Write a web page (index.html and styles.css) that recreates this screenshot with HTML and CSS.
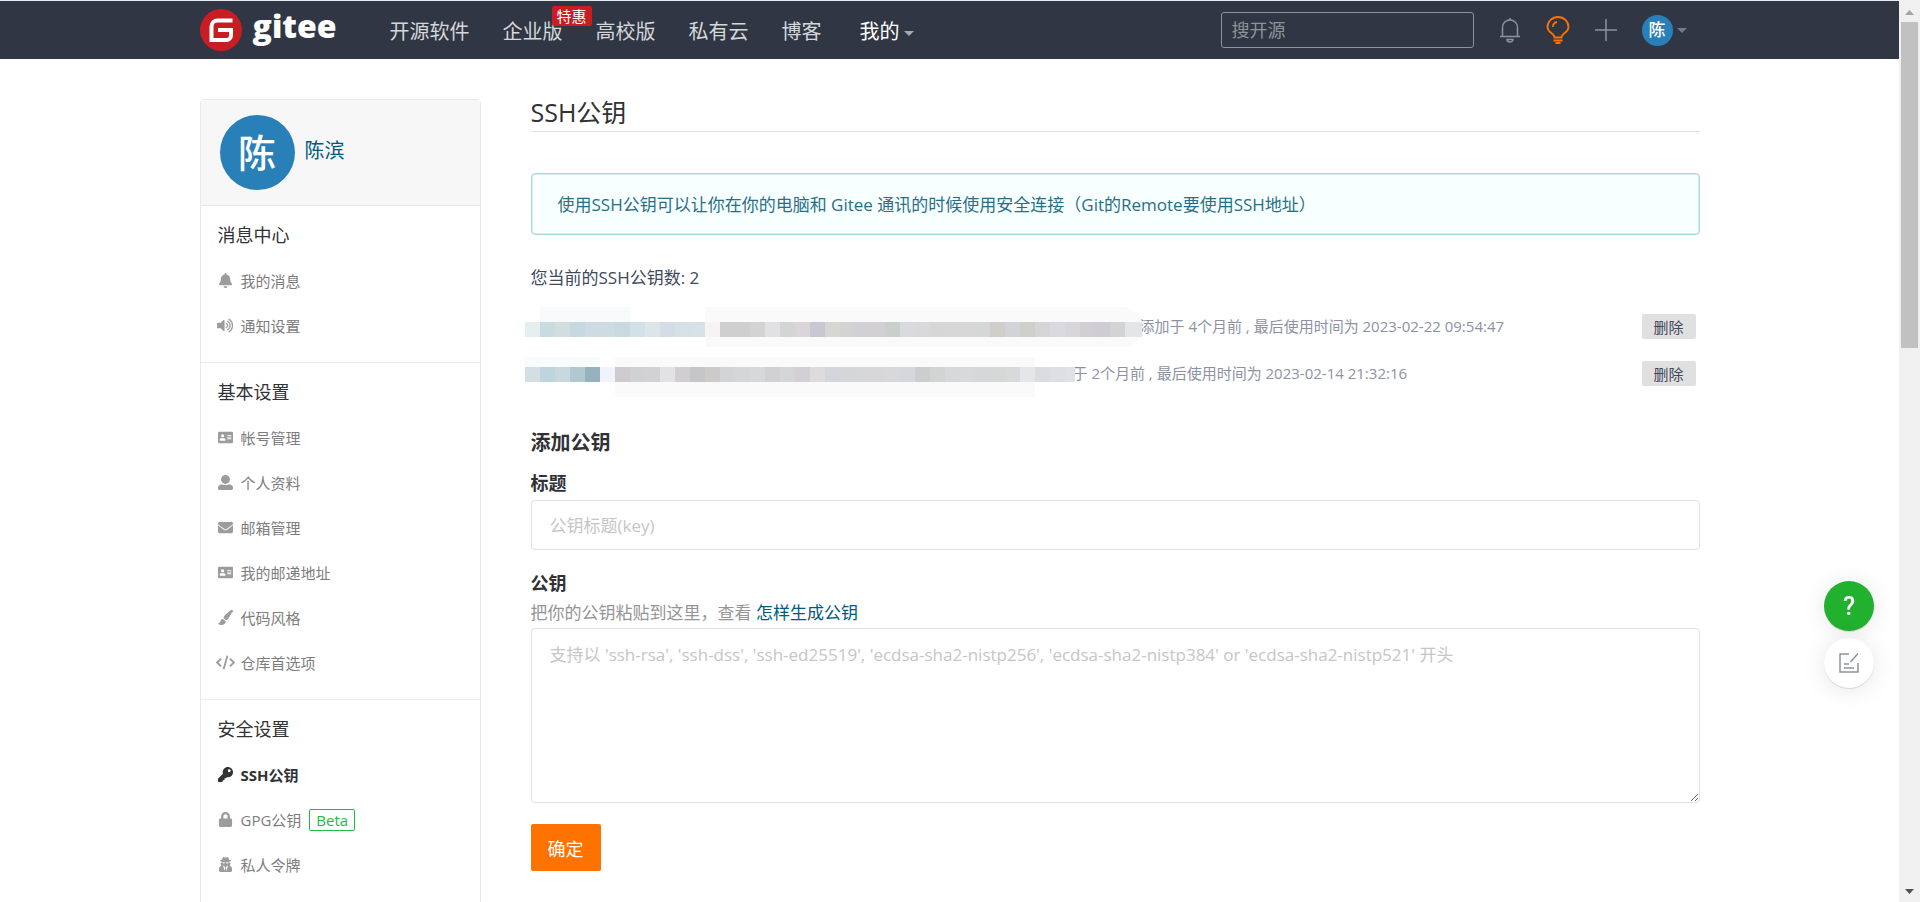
FILE: index.html
```html
<!DOCTYPE html>
<html lang="zh-CN">
<head>
<meta charset="utf-8">
<title>SSH公钥 - Gitee</title>
<link rel="stylesheet" href="styles.css">
</head>
<body>
<div class="window">
<div class="page">
  <header class="topbar">
    <div class="container topbar-inner">
      <a class="logo" href="#">
        <svg class="logo-mark" viewBox="0 0 42 42" aria-hidden="true"><circle cx="21" cy="21" r="21" fill="#c71d23"/><path d="M32.500 11.500H17.500a6 6 0 0 0-6 6V31H26.500a4.500 4.500 0 0 0 4.500-4.500V21H18" fill="none" stroke="#fff" stroke-width="4"/></svg>
        <span class="logo-text">gitee</span>
      </a>
      <nav class="nav">
        <a href="#">开源软件</a>
        <a href="#" class="has-tag">企业版<span class="tag">特惠</span></a>
        <a href="#">高校版</a>
        <a href="#">私有云</a>
        <a href="#">博客</a>
        <a href="#" class="mine">我的<span class="caret"></span></a>
      </nav>
      <div class="tools">
        <input class="search" type="text" placeholder="搜开源" aria-label="搜开源">
        <button class="tool" aria-label="通知"><svg width="22" height="26" viewBox="0 0 22 26" fill="none" stroke="#8c92a4" stroke-width="1.500"><path d="M1 19.500H21M3.500 19V10.500C3.500 6 7 3 11 3s7.500 3 7.500 7.500V19M8 22.500h6a3 2.500 0 0 1-6 0ZM10 2h2"/></svg></button>
        <button class="tool" aria-label="推荐"><svg width="24" height="28" viewBox="0 0 24 28" fill="none" stroke="#fe7300" stroke-width="1.800"><path d="M8.500 21.500C8.500 17 1.500 17 1.500 11a10.500 10 0 0 1 21 0c0 6-7 6-7 10.500ZM7 11a5 5 0 0 1 4-5M7.500 24.500h9M9.500 27h5"/></svg></button>
        <button class="tool" aria-label="新建"><svg width="22" height="22" viewBox="0 0 22 22" stroke="#8c92a4" stroke-width="1.500"><path d="M0 11H22M11 0V22"/></svg></button>
        <button class="account" aria-label="账户"><span class="avatar avatar-small">陈</span><span class="caret"></span></button>
      </div>
    </div>
  </header>

  <div class="container content">
    <aside class="sidebar">
      <div class="profile"><span class="avatar">陈</span><a href="#">陈滨</a></div>
      <section class="group">
        <h2>消息中心</h2>
        <a href="#"><svg viewBox="0 0 448 512"><path d="M224 512c35.320 0 63.970-28.650 63.970-64H160.030c0 35.350 28.650 64 63.970 64zm215.390-149.710c-19.320-20.760-55.470-51.990-55.470-154.290 0-77.700-54.480-139.900-127.940-155.160V32c0-17.670-14.320-32-31.980-32s-31.980 14.330-31.980 32v20.840C118.560 68.100 64.080 130.300 64.080 208c0 102.300-36.150 133.530-55.470 154.290-6 6.450-8.660 14.160-8.610 21.710.110 16.400 12.980 32 32.100 32h383.800c19.120 0 32-15.600 32.100-32 .050-7.550-2.610-15.270-8.610-21.710z"/></svg>我的消息</a>
        <a href="#"><svg class="wide" viewBox="0 0 576 512"><path d="M215 71 126 160H24c-13 0-24 11-24 24v144c0 13 11 24 24 24h102l89 89c15 15 41 4 41-17V88c0-21-26-32-41-17Z"/><path d="M318 183a84 84 0 0 1 0 146M362 112a166 166 0 0 1 0 288M408 45a248 248 0 0 1 0 422" fill="none" stroke="currentColor" stroke-width="46" stroke-linecap="round"/></svg>通知设置</a>
      </section>
      <section class="group">
        <h2>基本设置</h2>
        <a href="#"><svg viewBox="0 0 576 512"><path fill-rule="evenodd" d="M528 32H48C21.500 32 0 53.500 0 80v352c0 26.500 21.500 48 48 48h480c26.500 0 48-21.500 48-48V80c0-26.500-21.500-48-48-48zM176 128a64 64 0 1 1 0 128 64 64 0 0 1 0-128zm112 236c0 11-10 20-22 20H86c-12 0-22-9-22-20v-19c0-32 30-58 67-58h90c37 0 67 26 67 58ZM512 312c0 4-4 8-8 8H360c-4 0-8-4-8-8v-16c0-4 4-8 8-8h144c4 0 8 4 8 8zm0-64c0 4-4 8-8 8H360c-4 0-8-4-8-8v-16c0-4 4-8 8-8h144c4 0 8 4 8 8zm0-64c0 4-4 8-8 8H360c-4 0-8-4-8-8v-16c0-4 4-8 8-8h144c4 0 8 4 8 8z"/></svg>帐号管理</a>
        <a href="#"><svg viewBox="0 0 512 512"><path d="M256 0a152 152 0 1 1 0 304 152 152 0 0 1 0-304ZM110 320h45c62 29 140 29 202 0h45c61 0 110 49 110 110v34c0 27-21 48-48 48H48c-27 0-48-21-48-48v-34c0-61 49-110 110-110Z"/></svg>个人资料</a>
        <a href="#"><svg viewBox="0 0 512 512"><path d="M502.300 190.800c3.900-3.100 9.700-.2 9.700 4.700V400c0 26.500-21.500 48-48 48H48c-26.500 0-48-21.500-48-48V195.600c0-5 5.700-7.800 9.700-4.700 22.400 17.400 52.100 39.500 154.100 113.600 21.100 15.400 56.700 47.800 92.200 47.600 35.700.3 72-32.800 92.300-47.600 102-74.100 131.600-96.300 154-113.700zM256 320c23.200.4 56.600-29.200 73.400-41.400 132.700-96.300 142.800-104.700 173.400-128.700 5.800-4.500 9.200-11.500 9.200-18.900v-19c0-26.500-21.500-48-48-48H48c-26.500 0-48 21.500-48 48v19c0 7.400 3.400 14.300 9.200 18.900 30.600 23.900 40.700 32.400 173.400 128.700 16.800 12.200 50.200 41.800 73.400 41.400z"/></svg>邮箱管理</a>
        <a href="#"><svg viewBox="0 0 576 512"><path fill-rule="evenodd" d="M528 32H48C21.500 32 0 53.500 0 80v352c0 26.500 21.500 48 48 48h480c26.500 0 48-21.500 48-48V80c0-26.500-21.500-48-48-48zM176 128a64 64 0 1 1 0 128 64 64 0 0 1 0-128zm112 236c0 11-10 20-22 20H86c-12 0-22-9-22-20v-19c0-32 30-58 67-58h90c37 0 67 26 67 58ZM512 312c0 4-4 8-8 8H360c-4 0-8-4-8-8v-16c0-4 4-8 8-8h144c4 0 8 4 8 8zm0-64c0 4-4 8-8 8H360c-4 0-8-4-8-8v-16c0-4 4-8 8-8h144c4 0 8 4 8 8zm0-64c0 4-4 8-8 8H360c-4 0-8-4-8-8v-16c0-4 4-8 8-8h144c4 0 8 4 8 8z"/></svg>我的邮递地址</a>
        <a href="#"><svg viewBox="0 0 512 512"><path d="M168 307c-48 1-87 39-87 88 0 32-24 49-47 49-10 0-21-8-34-20 10 56 55 88 117 88 90 0 145-51 145-121v-4ZM457 0c-15 0-30 7-41 17C213 197 192 213 192 257c0 11 3 21 6 31l75 63c46-9 77-41 213-295 9-17 18-36 18-56 0-24-23 0-47 0ZM512 45c0-28-24-45-55-45l-55 30 80 60Z"/></svg>代码风格</a>
        <a href="#"><svg class="wide" viewBox="0 0 640 512"><path d="M170 120 35 256l135 136M470 120l135 136-135 136M385 25 255 487" fill="none" stroke="currentColor" stroke-width="62"/></svg>仓库首选项</a>
      </section>
      <section class="group">
        <h2>安全设置</h2>
        <a href="#" class="active"><svg viewBox="0 0 512 512"><path d="M512 176.001C512 273.203 433.202 352 336 352c-11.220 0-22.190-1.062-32.827-3.069l-24.012 27.014A23.999 23.999 0 0 1 261.223 384H224v40c0 13.255-10.745 24-24 24h-40v40c0 13.255-10.745 24-24 24H24c-13.255 0-24-10.745-24-24v-78.059c0-6.365 2.529-12.470 7.029-16.971l161.802-161.802C163.108 213.814 160 195.271 160 176 160 78.798 238.797.001 335.999 0 433.488-.001 512 78.511 512 176.001zM336 128c0 26.510 21.490 48 48 48s48-21.490 48-48-21.490-48-48-48-48 21.490-48 48z"/></svg>SSH公钥</a>
        <a href="#"><svg viewBox="0 0 448 512"><path d="M400 224h-24v-72C376 68.200 307.800 0 224 0S72 68.200 72 152v72H48c-26.500 0-48 21.500-48 48v192c0 26.500 21.500 48 48 48h352c26.500 0 48-21.500 48-48V272c0-26.500-21.500-48-48-48zm-104 0H152v-72c0-39.700 32.300-72 72-72s72 32.300 72 72v72z"/></svg>GPG公钥<span class="beta">Beta</span></a>
        <a href="#"><svg viewBox="0 0 448 512"><path fill-rule="evenodd" d="M135 10c15-20 40-8 63 5 17 8 35 8 52 0 23-13 48-25 63-5 15 20 27 55 34 86 40 8 66 18 66 32 0 13-22 24-58 32 8 22 5 35-3 42h32c11 0 18 11 14 21l-30 76c46 20 80 64 80 117v48c0 26-22 48-48 48H48c-26 0-48-22-48-48v-48c0-52 32-97 79-116l-28-77c-4-10 4-21 15-21h30c-8-7-11-20-3-42-36-8-58-19-58-32 0-14 26-24 66-32 7-31 19-66 34-86ZM192 480l24-112-24-48-52-30ZM256 480l52-190-52 30-24 48ZM118 183c4 55 82 55 94 5h24c12 50 90 50 94-5l-106 7Z"/></svg>私人令牌</a>
        <a href="#" aria-label="更多"><svg viewBox="0 0 512 512"><circle cx="240" cy="170" r="210"/></svg></a>
      </section>
    </aside>

    <main class="main">
      <h1>SSH公钥</h1>
      <p class="message">使用SSH公钥可以让你在你的电脑和 Gitee 通讯的时候使用安全连接（Git的Remote要使用SSH地址）</p>
      <p class="count">您当前的SSH公钥数: 2</p>
      <ul class="keys">
        <li>
          <svg class="mosaic" width="617" height="47" viewBox="0 0 617 47" aria-hidden="true">
            <path fill="#fafafb" d="M180 4H597a20 20 0 0 1 20 20 20 20 0 0 1-20 20H180Z"/><path fill="#f8fbfb" d="M15 4H105V19H15Z"/>
            <g id="m1"></g>
          </svg>
          <span>添加于 4个月前 , 最后使用时间为 2023-02-22 09:54:47</span>
          <button>删除</button>
        </li>
        <li>
          <svg class="mosaic" width="550" height="47" viewBox="0 0 550 47" aria-hidden="true">
            <path fill="#fafafa" d="M90 7H510V47H90Z"/><path fill="#f9fcfd" d="M0 7H75V17H0Z"/>
            <g id="m2"></g>
          </svg>
          <span>于 2个月前 , 最后使用时间为 2023-02-14 21:32:16</span>
          <button>删除</button>
        </li>
      </ul>
      <form class="form">
        <h2>添加公钥</h2>
        <label for="title">标题</label>
        <input id="title" type="text" placeholder="公钥标题(key)">
        <label for="key" class="key-label">公钥</label>
        <p class="hint">把你的公钥粘贴到这里，查看 <a href="#">怎样生成公钥</a></p>
        <textarea id="key" placeholder="支持以 'ssh-rsa', 'ssh-dss', 'ssh-ed25519', 'ecdsa-sha2-nistp256', 'ecdsa-sha2-nistp384' or 'ecdsa-sha2-nistp521' 开头"></textarea>
        <button type="submit">确定</button>
      </form>
    </main>
  </div>
</div>

<div class="scrollbar" aria-hidden="true">
  <svg width="9" height="5" viewBox="0 0 9 5"><path d="M0 5 4.500 0 9 5Z" fill="#a3a3a3"/></svg>
  <div class="thumb"></div>
  <svg width="9" height="5" viewBox="0 0 9 5"><path d="M0 0H9L4.500 5Z" fill="#505050"/></svg>
</div>
</div>

<div class="floating">
  <button class="help" aria-label="帮助">?</button>
  <button class="feedback" aria-label="反馈"><svg width="20" height="20" viewBox="0 0 20 20" fill="none" stroke="#8c92a4" stroke-width="1.500"><path d="M10 1H1V19H19V10M19 .5 11.500 9M5 11h5M5 15H15"/></svg></button>
</div>
<script src="mosaic.js"></script>
</body>
</html>
```
FILE: styles.css
```css
* { box-sizing: border-box; }
body, h1, h2, p, ul { margin: 0; padding: 0; }
body, input, textarea, button { font-family: "Open Sans", "Noto Sans CJK SC", sans-serif; }
body { background: #fff; color: #40485b; font-size: 17px; }
a { color: #005980; text-decoration: none; }
button { border: 0; padding: 0; background: none; cursor: pointer; }
.window { display: flex; height: 100vh; overflow: hidden; }
.page { flex: 1; min-width: 0; }
.container { max-width: 1500px; margin: 0 auto; }

.topbar { background: #303643; border-top: 1px solid #e3ecec; }
.topbar-inner { display: flex; align-items: center; height: 58px; }
.logo { display: flex; align-items: center; gap: 11px; width: 190px; }
.logo-mark { width: 42px; height: 42px; }
.logo-text { color: #fff; font-size: 32px; font-weight: 800; line-height: 42px; padding-bottom: 8px; }
.nav { display: flex; gap: 33px; padding-top: 3px; font-size: 20px; line-height: 30px; }
.nav a { color: #d5d7da; }
.has-tag { position: relative; }
.tag { position: absolute; left: 49px; top: -11px; width: 40px; border-radius: 2px; background: #c71d23; color: #fff; font-size: 15px; line-height: 20px; text-align: center; }
.nav .mine { margin-left: 5px; color: #fff; }
.caret { display: inline-block; border: 5px solid transparent; border-top-color: #a5a8ae; border-bottom: 0; margin-left: 4px; vertical-align: 3px; }
.tools { display: flex; align-items: center; gap: 25px; margin-left: auto; padding-right: 13px; }
.search { width: 253px; height: 36px; padding: 0 10px; border: 1px solid #8c92a4; border-radius: 3px; background: transparent; color: #fff; font-size: 18px; }
.search::placeholder { color: #8f9398; }
.tool { display: flex; }
.account { display: flex; align-items: center; }
.account .caret { border-top-color: #737a8a; }
.avatar { display: flex; align-items: center; justify-content: center; width: 75px; height: 75px; border-radius: 50%; background: #2980b9; color: #fff; font-size: 38px; font-weight: 500; line-height: 1; padding-bottom: 2px; }
.avatar-small { width: 31px; height: 31px; font-size: 17px; }

.content { display: flex; align-items: flex-start; gap: 50px; padding-top: 40px; }
.sidebar { flex: 0 0 281px; border: 1px solid #e3e9ed; border-radius: 4px; }
.profile { display: flex; align-items: center; gap: 10px; height: 106px; padding: 0 19px; border-bottom: 1px solid #e3e9ed; background: #f7f7f7; font-size: 20px; }
.profile a { padding-bottom: 6px; }
.group { padding: 11px 17px 14px; }
.group + .group { border-top: 1px solid #ebeced; }
.group h2 { margin-bottom: 5px; color: #303236; font-size: 18px; font-weight: 400; line-height: 36px; }
.group a { display: flex; align-items: center; height: 45px; color: #7d7d7d; font-size: 15px; }
.group svg { width: 15px; height: 15px; margin-right: 8px; fill: currentColor; color: #9c9c9c; }
.group .wide { width: 19px; margin: 0 6px 0 -2px; }
.group .active { color: #303236; font-weight: 700; }
.group .active svg { color: #303236; }
.beta { margin-left: 8px; padding: 0 6px; border: 1px solid #21ba45; border-radius: 2px; color: #21ba45; line-height: 20px; }

.main { flex: 1; min-width: 0; }
.main h1 { padding-bottom: 6px; border-bottom: 1px solid #e0e1e2; color: #303236; font-size: 25px; font-weight: 400; line-height: 26px; }
.message { margin-top: 41px; padding: 17px 26px 15px; border: 1px solid #a9d5de; border-radius: 4px; background: #f8ffff; box-shadow: 0 0 0 1px #a9d5de66 inset; color: #276f86; line-height: 28px; }
.count { margin-top: 29px; line-height: 28px; }
.keys { margin-top: 11px; list-style: none; }
.keys li { display: flex; align-items: center; height: 47px; padding-right: 4px; color: #8c92a4; font-size: 15px; }
.keys span { margin-left: -2px; padding-bottom: 3px; }
.mosaic { z-index: 1; margin-left: -6px; }
.keys button { width: 54px; height: 25px; margin-left: auto; border-radius: 2px; background: #e0e0e0; color: #40485b; font-size: 15px; }

.form { display: flex; flex-direction: column; align-items: stretch; margin-top: 32px; color: #303236; }
.form h2 { font-size: 20px; font-weight: 700; line-height: 28px; }
.form label { margin: 14px 0 5px; font-size: 18px; font-weight: 700; line-height: 24px; }
.form .key-label { margin: 21px 0 4px; }
.form input, .form textarea { padding: 0 18px; border: 1px solid #dfdfe6; border-radius: 4px; font-size: 17px; }
.form input { height: 50px; }
.form textarea { height: 175px; padding-top: 12px; line-height: 28px; }
.form input::placeholder, .form textarea::placeholder { color: #c6c6c6; }
.hint { margin-bottom: 1px; color: #959595; line-height: 28px; }
.form button { align-self: flex-start; width: 70px; height: 47px; margin-top: 21px; border-radius: 2px; background: #fe7300; color: #fff; font-size: 18px; }

.scrollbar { display: flex; flex-direction: column; align-items: center; width: 21px; padding: 10px 0 8px; background: #f0f0f0; }
.scrollbar svg { margin-top: auto; }
.scrollbar svg:first-child { margin: 0; }
.thumb { width: 17px; height: 326px; margin-top: 7px; background: #c1c1c1; }

.floating { position: fixed; right: 46px; bottom: 214px; display: flex; flex-direction: column; gap: 7px; }
.floating button { display: flex; align-items: center; justify-content: center; width: 50px; height: 50px; border-radius: 50%; background: #fff; box-shadow: 0 1px 1px #0002, 0 2px 24px #0000001a; }
.floating .help { background: #22b02f; color: #fff; font-family: Roboto, sans-serif; font-size: 25px; font-weight: 500; }
```
FILE: mosaic.js
```js
// Fills a masked key with a row of 15px colour blocks.
function fill(id, y, end, colors) {
  const group = document.getElementById(id);
  colors.split(" ").forEach((color, i) => {
    const block = document.createElementNS("http://www.w3.org/2000/svg", "rect");
    block.setAttribute("x", i * 15);
    block.setAttribute("y", y);
    block.setAttribute("width", Math.min(15, end - i * 15));
    block.setAttribute("height", 15);
    block.setAttribute("fill", "#" + color);
    group.append(block);
  });
}
fill("m1", 19, 617, "e6eff0 c9dbdf d2dddf c6d9e0 cfdbe3 ccdce2 c9dadf d2e0e7 dce6e9 d4dde6 d6e0e7 d6e1e8 f6f3f5 cfcfd0 cfcfcf d3d3d3 e1e1e3 d3d5d4 d9d5d8 c9c7d3 d6d7d3 d3d3d4 d0d0d5 d2d0d5 cacfcc dadadc d9d8da d6d6d7 d6d7d6 d6d7d6 d4d7d5 cfcec9 d1d3d7 cfcfcc d5d5d7 d9d9df d7d7db d1cfd3 cecdd3 d3d3d5 e3e5e9 e3e5e9");
fill("m2", 17, 550, "d4dfe3 bfd5de c9d7df b1c8d1 97b1be f0f4fa cecacd d0d1d4 d2d2d4 e2e2e4 d1ced3 c6c5ca cccbc9 d3d4d5 d5d6d8 d7d8da d1d1d3 d4d5d8 d2d0d5 dddbdc d3d5da d5d6d7 d6d7d9 d7d7d9 d7d7dc d6d7dc cccecd d2d4d4 d7d8d9 d8d9dc d5d7da d6d8d8 d8dad9 e4e6ea dadce2 dddfe5 dfe1e7");
```
